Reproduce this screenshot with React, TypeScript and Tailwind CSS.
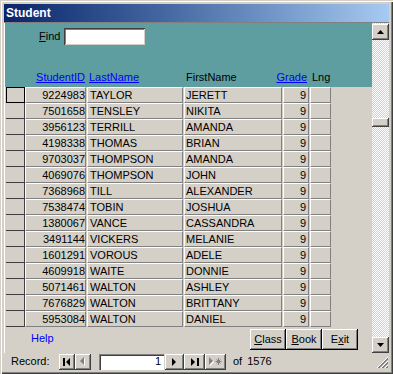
const students = [
  ['9224983', 'TAYLOR', 'JERETT'],
  ['7501658', 'TENSLEY', 'NIKITA'],
  ['3956123', 'TERRILL', 'AMANDA'],
  ['4198338', 'THOMAS', 'BRIAN'],
  ['9703037', 'THOMPSON', 'AMANDA'],
  ['4069076', 'THOMPSON', 'JOHN'],
  ['7368968', 'TILL', 'ALEXANDER'],
  ['7538474', 'TOBIN', 'JOSHUA'],
  ['1380067', 'VANCE', 'CASSANDRA'],
  ['3491144', 'VICKERS', 'MELANIE'],
  ['1601291', 'VOROUS', 'ADELE'],
  ['4609918', 'WAITE', 'DONNIE'],
  ['5071461', 'WALTON', 'ASHLEY'],
  ['7676829', 'WALTON', 'BRITTANY'],
  ['5953084', 'WALTON', 'DANIEL'],
];

const cell =
  'h-[16px] leading-[14px] border border-t-white border-l-white border-r-[#808080] border-b-[#808080] bg-[#d4d0c8] whitespace-nowrap overflow-hidden';

const raised =
  'bg-[#d4d0c8] shadow-[inset_-1px_-1px_#404040,inset_1px_1px_#fff,inset_-2px_-2px_#808080]';

const NavBtn = ({ children, w = 'w-[16px]' }: { children: React.ReactNode; w?: string }) => (
  <div className={`${w} h-[16px] flex items-center justify-center ${raised}`}>{children}</div>
);

const App = () => {
  return (
    <div className="w-[393px] h-[374px] bg-[#d4d0c8] px-[4px] pt-[4px] pb-[4px] flex flex-col font-['Liberation_Sans',Arial,sans-serif] text-[11px] text-black shadow-[inset_1px_1px_#d4d0c8,inset_2px_2px_#fff,inset_-1px_-1px_#404040,inset_-2px_-2px_#808080]">
      {/* Title bar */}
      <div className="h-[18px] bg-linear-to-r from-[#0a246a] to-[#a6caf0] flex items-center pl-[2px]">
        <span className="text-white font-bold text-[12px] leading-[14px]">Student</span>
      </div>

      {/* Client area */}
      <div className="flex-1 flex flex-col border-t border-t-[#808080]">
        <div className="flex h-[330px]">
          {/* Form body */}
          <div className="w-[368px] border-l border-l-white flex flex-col">
            {/* Header */}
            <div className="h-[64px] bg-[#5f9ea0] flex flex-col">
              <div className="flex items-center pt-[5px] pl-[34px] gap-[4px]">
                <span className="leading-[13px]">
                  <span className="underline">F</span>ind
                </span>
                <div className="w-[81px] h-[17px] bg-white shadow-[inset_1px_1px_#404040,inset_-1px_-1px_#d4d0c8,inset_2px_2px_#808080]" />
              </div>
              <div className="mt-auto pb-[3px] pl-[1px] flex leading-[13px]">
                <div className="w-[19px]" />
                <div className="w-[61px] text-right pr-[1px] text-[#0000ff] underline">StudentID</div>
                <div className="w-[1px]" />
                <div className="w-[96px] pl-[2px] text-[#0000ff] underline">LastName</div>
                <div className="w-[1px]" />
                <div className="w-[98px] pl-[2px]">FirstName</div>
                <div className="w-[1px]" />
                <div className="w-[26px] flex justify-end pr-[2px]">
                  <span className="whitespace-nowrap text-[#0000ff] underline">Grade</span>
                </div>
                <div className="w-[1px]" />
                <div className="w-[21px] pl-[2px]">Lng</div>
              </div>
            </div>

            {/* Rows */}
            <div className="flex flex-col">
              {students.map(([id, last, first], i) => (
                <div key={i} className="flex h-[16px] pl-[1px]">
                  <div
                    className={
                      i === 0
                        ? 'w-[19px] h-[16px] border border-black'
                        : 'w-[19px] h-[16px] border-r border-b border-r-[#404040] border-b-[#404040]'
                    }
                  />
                  <div className={`${cell} w-[61px] text-right pr-0`}>{id}</div>
                  <div className="w-[1px]" />
                  <div className={`${cell} w-[96px] pl-[2px]`}>{last}</div>
                  <div className="w-[1px]" />
                  <div className={`${cell} w-[98px] pl-[1px]`}>{first}</div>
                  <div className="w-[1px]" />
                  <div className={`${cell} w-[26px] text-right pr-[2px]`}>9</div>
                  <div className="w-[1px]" />
                  <div className={`${cell} w-[21px]`} />
                </div>
              ))}
            </div>

            {/* Footer */}
            <div className="flex-1 flex items-start pl-[26px] pr-[14px]">
              <span className="mt-[5px] leading-[13px] text-[#0000ff]">Help</span>
              <div className="ml-auto mt-[2px] flex">
                {[
                  ['C', 'lass'],
                  ['B', 'ook'],
                ].map(([u, rest]) => (
                  <div
                    key={u}
                    className="w-[36px] h-[21px] flex items-center justify-center bg-[#d4d0c8] shadow-[inset_-1px_-1px_#000,inset_1px_1px_#fff,inset_-2px_-2px_#808080]"
                  >
                    <span>
                      <span className="underline">{u}</span>
                      {rest}
                    </span>
                  </div>
                ))}
                <div className="w-[36px] h-[21px] flex items-center justify-center bg-[#d4d0c8] shadow-[inset_-1px_-1px_#000,inset_1px_1px_#fff,inset_-2px_-2px_#808080]">
                  <span>
                    E<span className="underline">x</span>it
                  </span>
                </div>
              </div>
            </div>
          </div>

          {/* Vertical scrollbar */}
          <div className="w-[17px] flex flex-col bg-[image:repeating-conic-gradient(#fff_0_25%,#d4d0c8_0_50%)] bg-[length:2px_2px] pt-[1px]">
            <div className={`h-[16px] flex items-center justify-center ${raised}`}>
              <svg width="7" height="4" viewBox="0 0 7 4">
                <path d="M3.5 0 L7 4 L0 4 Z" fill="#000" />
              </svg>
            </div>
            <div className={`mt-[78px] h-[9px] ${raised}`} />
            <div className="flex-1" />
            <div className={`h-[16px] flex items-center justify-center ${raised}`}>
              <svg width="7" height="4" viewBox="0 0 7 4">
                <path d="M0 0 L7 0 L3.5 4 Z" fill="#000" />
              </svg>
            </div>
          </div>
        </div>

        {/* Record navigation */}
        <div className="h-[17px] flex items-center pl-[7px]">
          <span className="leading-[13px] w-[48px]">Record:</span>
          <NavBtn>
            <svg width="8" height="8" viewBox="0 0 8 8">
              <rect x="0" y="0" width="2" height="8" fill="#000" />
              <path d="M7 0 L7 8 L3 4 Z" fill="#000" />
            </svg>
          </NavBtn>
          <NavBtn>
            <svg width="6" height="9" viewBox="0 0 6 9">
              <path d="M5 1 L5 9 L1 5 Z" fill="#fff" />
              <path d="M4 0 L4 8 L0 4 Z" fill="#808080" />
            </svg>
          </NavBtn>
          <div className="ml-[8px] w-[65px] h-[16px] bg-white text-right pr-[3px] leading-[15px] shadow-[inset_1px_1px_#808080,inset_2px_2px_#404040,inset_-1px_-1px_#fff]">
            1
          </div>
          <div className="ml-[1px] flex">
            <NavBtn w="w-[19px]">
              <svg width="5" height="8" viewBox="0 0 5 8">
                <path d="M0 0 L0 8 L4 4 Z" fill="#000" />
              </svg>
            </NavBtn>
            <NavBtn w="w-[21px]">
              <svg width="8" height="8" viewBox="0 0 8 8">
                <path d="M0 0 L0 8 L4 4 Z" fill="#000" />
                <rect x="6" y="0" width="2" height="8" fill="#000" />
              </svg>
            </NavBtn>
            <NavBtn w="w-[21px]">
              <svg width="13" height="9" viewBox="0 0 13 9">
                <path d="M1 1 L1 9 L5 5 Z" fill="#fff" />
                <path d="M0 0 L0 8 L4 4 Z" fill="#808080" />
                <g stroke="#808080" strokeWidth="1">
                  <path d="M9.5 1 V8 M6.5 4.5 H12.5 M7.5 2.5 L11.5 6.5 M11.5 2.5 L7.5 6.5" />
                </g>
              </svg>
            </NavBtn>
          </div>
          <span className="ml-[7px] leading-[13px]">of</span>
          <span className="ml-[5px] leading-[13px]">1576</span>
          <div className="ml-auto w-[14px] h-[14px] self-end mb-[1px]">
            <svg width="14" height="14" viewBox="0 0 14 14">
              <g strokeWidth="1">
                <path d="M13 2 L2 13" stroke="#fff" />
                <path d="M13 3 L3 13 M13 4 L4 13" stroke="#808080" />
                <path d="M13 6 L6 13" stroke="#fff" />
                <path d="M13 7 L7 13 M13 8 L8 13" stroke="#808080" />
                <path d="M13 10 L10 13" stroke="#fff" />
                <path d="M13 11 L11 13 M13 12 L12 13" stroke="#808080" />
              </g>
            </svg>
          </div>
        </div>
      </div>
    </div>
  );
};

export default App;
